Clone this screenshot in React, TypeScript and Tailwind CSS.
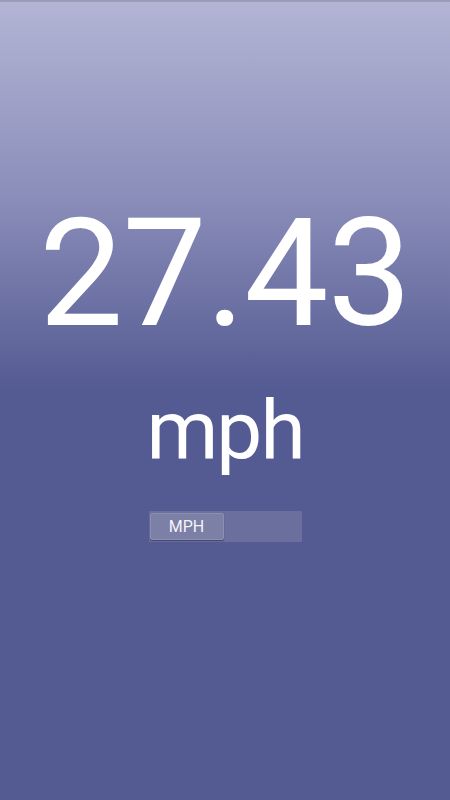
export default function App() {
  return (
    <div
      className="relative flex h-[800px] w-full flex-col items-center overflow-hidden bg-[linear-gradient(to_bottom,#b3b5d5_0px,#8a8db9_200px,#545a92_390px,#545a92_800px)] text-white"
      style={{ fontFamily: "Roboto, 'Liberation Sans', sans-serif" }}
    >
      <div className="absolute inset-x-0 top-0 h-[2px] bg-[#9a9cb8]" />
      <div className="mt-[199px] text-[150px] leading-none font-normal tracking-[-1px]">27.43</div>
      <div className="mt-[40px] text-[82px] leading-none tracking-[-2px]">mph</div>
      <div className="mt-[40px] flex h-[31px] w-[153px] items-center bg-[#6b6f9e] pl-[1px]">
        <div className="flex h-[27px] w-[74px] items-center justify-center rounded-[2px] border border-[#8c8fb0] bg-[#7c7fa6] text-[16px] text-[#f4f4f8] shadow-[0_1px_1px_rgba(40,42,80,0.6)]">
          MPH
        </div>
      </div>
    </div>
  );
}
